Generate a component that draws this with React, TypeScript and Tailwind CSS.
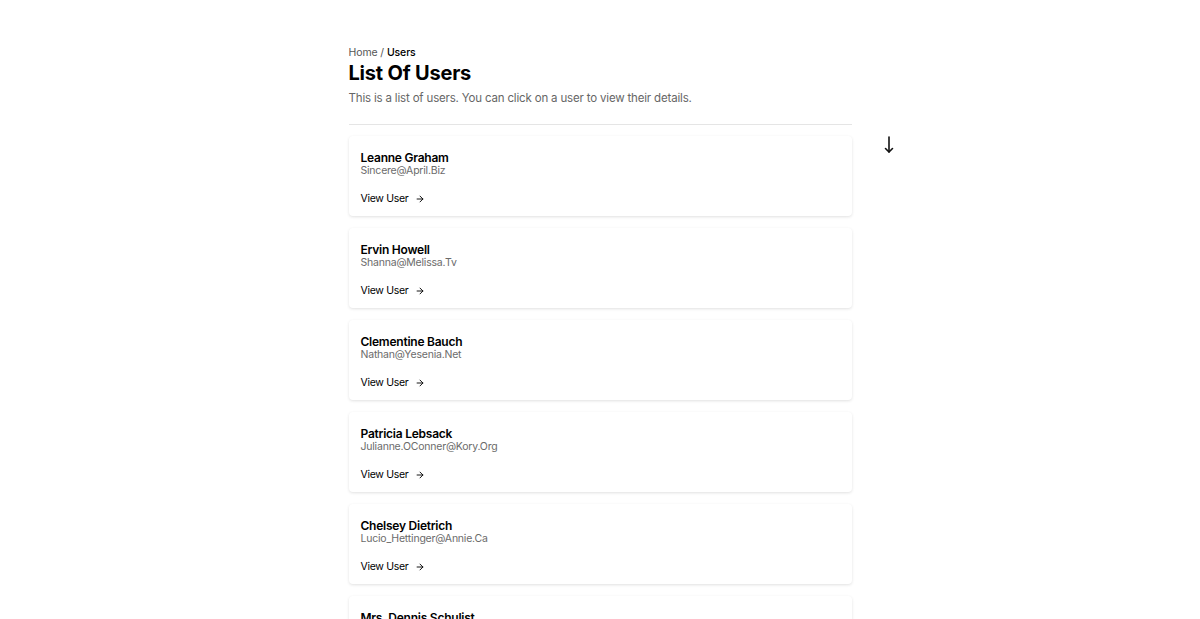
import React from "react";

const users = [
  { name: "Leanne Graham", email: "Sincere@April.Biz" },
  { name: "Ervin Howell", email: "Shanna@Melissa.Tv" },
  { name: "Clementine Bauch", email: "Nathan@Yesenia.Net" },
  { name: "Patricia Lebsack", email: "Julianne.OConner@Kory.Org" },
  { name: "Chelsey Dietrich", email: "Lucio_Hettinger@Annie.Ca" },
  { name: "Mrs. Dennis Schulist", email: "Karley_Dach@Jasper.Info" },
];

export default function App() {
  return (
    <div className="h-[619px] overflow-hidden bg-white text-black" style={{ fontFamily: "Inter, 'Noto Sans', sans-serif" }}>
      <div className="relative mx-auto w-[503px] pt-[45px]">
        <div className="text-[10.5px] leading-4 tracking-[-0.01em] text-[#555]">
          Home / <span className="font-medium text-black">Users</span>
        </div>
        <h1 className="text-[20px] font-bold leading-6 tracking-[-0.01em]">List Of Users</h1>
        <p className="mt-[3px] text-[11.5px] leading-5 tracking-[-0.015em] text-[#666]">
          This is a list of users. You can click on a user to view their details.
        </p>
        <div className="mt-[16px] h-px bg-[#e5e5e5]" />
        <svg className="absolute left-[535px] top-[136px]" width="10" height="18" viewBox="0 0 10 18" fill="none" stroke="#111" strokeWidth="1.6" strokeLinecap="round" strokeLinejoin="round">
          <path d="M5 1v15" />
          <path d="M1.5 12.5L5 16l3.5-3.5" />
        </svg>
        <div className="mt-[11px] flex flex-col gap-3">
          {users.map((u) => (
            <div key={u.name} className="h-[80px] shrink-0 rounded-[4px] bg-white px-3 pt-[15px] shadow-[0_1px_3px_rgba(0,0,0,0.12)]">
              <div className="text-[12px] font-semibold leading-[14px] tracking-[-0.02em]">{u.name}</div>
              <div className="text-[10.5px] leading-3 tracking-[-0.02em] text-[#6b6b6b]">{u.email}</div>
              <div className="mt-[14px] flex items-center gap-[7px] text-[10.5px] leading-4 tracking-[-0.03em]">
                <span>View User</span>
                <svg width="10" height="10" viewBox="0 0 24 24" fill="none" stroke="currentColor" strokeWidth="2.2" strokeLinecap="round" strokeLinejoin="round">
                  <path d="M5 12h14" />
                  <path d="M12 5l7 7-7 7" />
                </svg>
              </div>
            </div>
          ))}
        </div>
      </div>
    </div>
  );
}
